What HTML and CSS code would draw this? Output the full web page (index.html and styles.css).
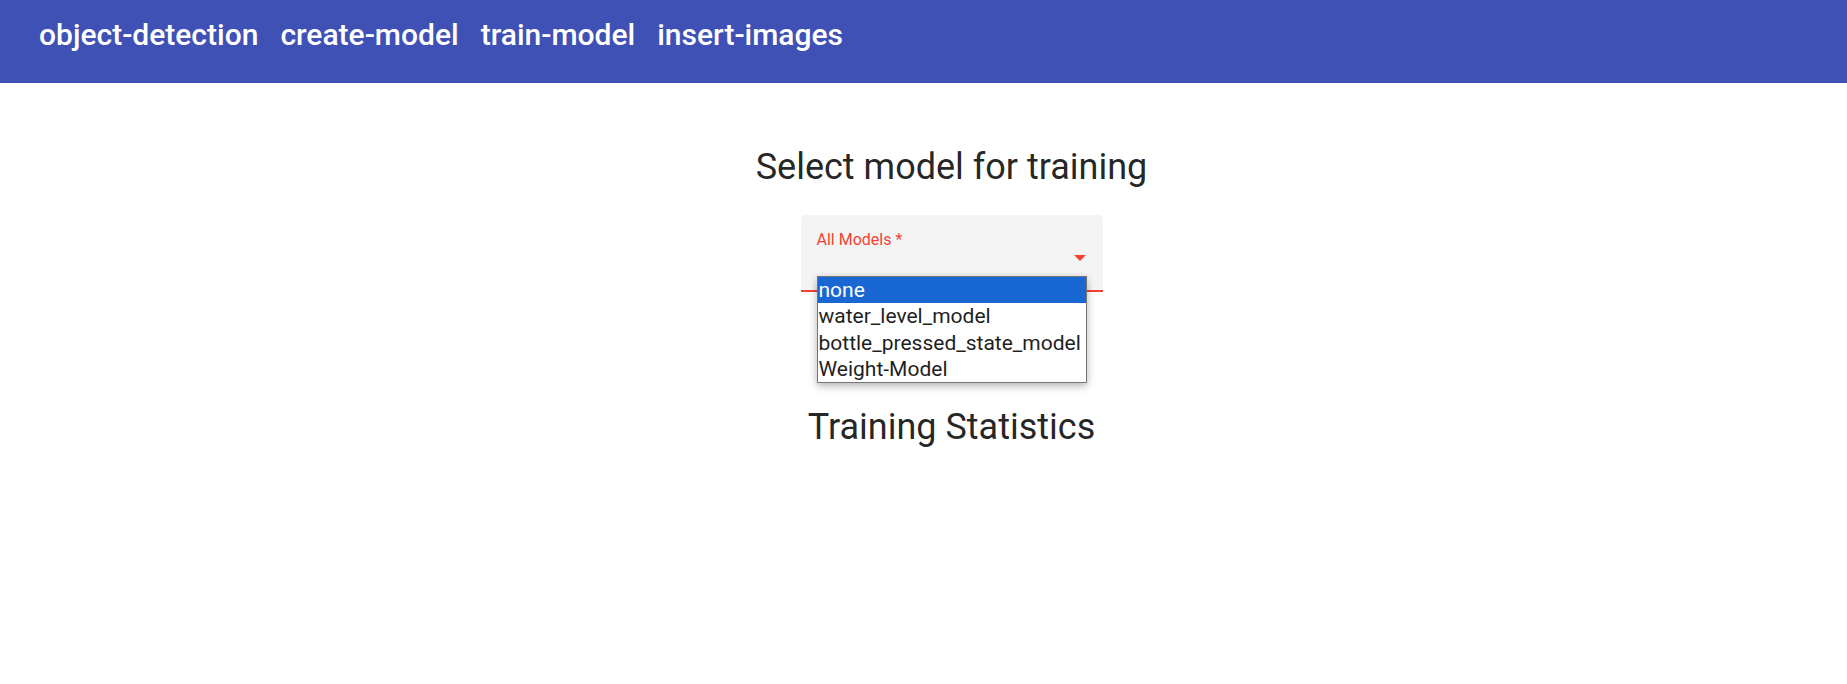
FILE: index.html
```html
<!DOCTYPE html>
<html>
<head>
<meta charset="utf-8">
<link rel="stylesheet" href="styles.css">
</head>
<body>
<header class="appbar">
  <nav class="nav">
    <a class="nav-link">object-detection</a>
    <a class="nav-link">create-model</a>
    <a class="nav-link">train-model</a>
    <a class="nav-link">insert-images</a>
  </nav>
</header>
<main class="main">
  <h1 class="title">Select model for training</h1>
  <div class="select-wrap">
    <div class="select-box">
      <div class="select-label">All Models *</div>
      <span class="select-arrow"></span>
    </div>
    <ul class="listbox">
      <li class="option selected">none</li>
      <li class="option">water_level_model</li>
      <li class="option">bottle_pressed_state_model</li>
      <li class="option">Weight-Model</li>
    </ul>
  </div>
  <h2 class="title stats">Training Statistics</h2>
</main>
</body>
</html>
```
FILE: styles.css
```css
html, body {
  margin: 0;
  padding: 0;
  background: #ffffff;
  font-family: Roboto, "Liberation Sans", sans-serif;
}
.appbar {
  height: 83px;
  background: #3f51b5;
  box-sizing: border-box;
  padding: 18px 0 0 39px;
}
.nav {
  display: flex;
  gap: 22px;
}
.nav-link {
  color: #ffffff;
  font-size: 30px;
  font-weight: 500;
  line-height: 34px;
  text-decoration: none;
}
.main {
  padding-left: 56px;
  display: flex;
  flex-direction: column;
  align-items: center;
}
.title {
  margin: 63px 0 0 0;
  font-size: 36px;
  font-weight: 400;
  line-height: 42px;
  color: rgba(0, 0, 0, 0.87);
}
.select-wrap {
  position: relative;
  margin-top: 27px;
  width: 302px;
}
.select-box {
  position: relative;
  height: 77px;
  box-sizing: border-box;
  background: #f4f4f4;
  border-radius: 5px 5px 0 0;
  border-bottom: 2px solid #f44336;
  padding: 15px 0 0 16px;
}
.select-label {
  color: #f44336;
  font-size: 16px;
  line-height: 19px;
}
.select-arrow {
  position: absolute;
  right: 17px;
  top: 40px;
  width: 0;
  height: 0;
  border-left: 6.5px solid transparent;
  border-right: 6.5px solid transparent;
  border-top: 6.5px solid #f44336;
}
.listbox {
  position: absolute;
  left: 16px;
  top: 61px;
  width: 270px;
  box-sizing: border-box;
  margin: 0;
  padding: 0;
  list-style: none;
  background: #ffffff;
  border: 1px solid #767676;
  box-shadow: 0 3px 8px rgba(0, 0, 0, 0.3);
}
.option {
  font-size: 21px;
  line-height: 26.25px;
  padding-left: 1px;
  color: #1f1f1f;
  white-space: nowrap;
}
.option.selected {
  background: #1967d2;
  color: #ffffff;
}
.stats {
  margin-top: 114px;
}
```
